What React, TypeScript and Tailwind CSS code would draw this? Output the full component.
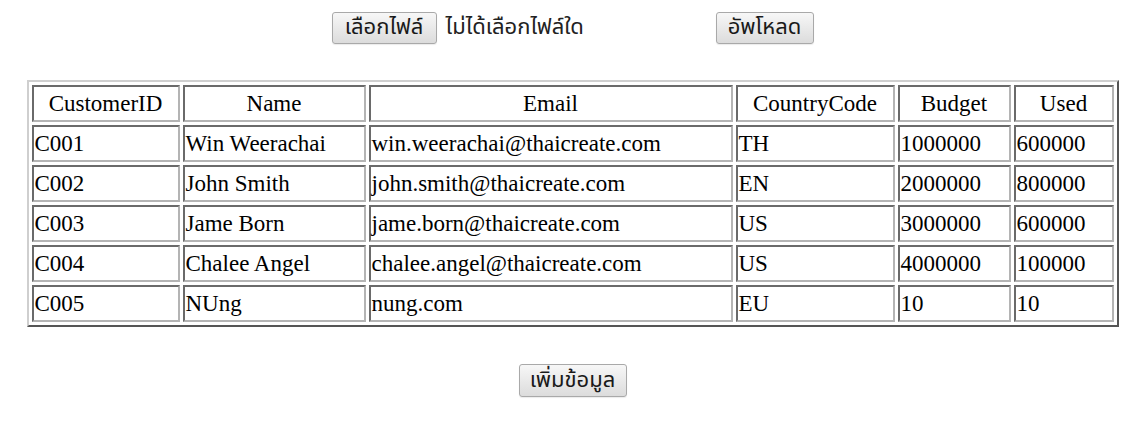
const rows = [
  ['C001', 'Win Weerachai', 'win.weerachai@thaicreate.com', 'TH', '1000000', '600000'],
  ['C002', 'John Smith', 'john.smith@thaicreate.com', 'EN', '2000000', '800000'],
  ['C003', 'Jame Born', 'jame.born@thaicreate.com', 'US', '3000000', '600000'],
  ['C004', 'Chalee Angel', 'chalee.angel@thaicreate.com', 'US', '4000000', '100000'],
  ['C005', 'NUng', 'nung.com', 'EU', '10', '10'],
];

const headers = ['CustomerID', 'Name', 'Email', 'CountryCode', 'Budget', 'Used'];
const widths = ['w-[148px]', 'w-[183px]', 'w-[364px]', 'w-[159px]', 'w-[113px]', 'w-[100px]'];

const thai = { fontFamily: 'Tahoma, "Noto Sans Thai", "DejaVu Sans", sans-serif' };

function Button({ label, className }: { label: string; className: string }) {
  return (
    <button
      type="button"
      className={`flex items-center justify-center rounded-[3px] border border-[#a9a9a9] bg-gradient-to-b from-[#f7f7f7] to-[#dcdcdc] text-[22px] leading-none text-[#1a1a1a] shadow-[0_1px_1px_rgba(0,0,0,0.08)] ${className}`}
      style={thai}
    >
      {label}
    </button>
  );
}

const cell =
  'h-[37px] border-2 border-t-[#6a6a6a] border-l-[#6a6a6a] border-b-[#b4b4b4] border-r-[#b4b4b4] p-0 px-[1px] align-middle leading-none';

export default function App() {
  return (
    <div className="flex min-h-[421px] flex-col items-center bg-white pl-[8px] pt-[12px] text-black">
      {/* form upload */}
      <div className="flex items-center">
        <div className="flex w-[384px] items-center">
          <Button label="เลือกไฟล์" className="h-[32px] w-[105px]" />
          <span className="ml-[9px] text-[22px] leading-none text-[#222]" style={thai}>
            ไม่ได้เลือกไฟล์ใด
          </span>
        </div>
        <Button label="อัพโหลด" className="h-[32px] w-[98px]" />
      </div>

      <table
        className="mt-[36px] w-[1092px] table-fixed border-separate border-spacing-[3px] border-2 border-t-[#cfcfcf] border-l-[#cfcfcf] border-b-[#555] border-r-[#555] text-[23px]"
        style={{ fontFamily: '"Liberation Serif", "Times New Roman", serif' }}
      >
        <thead>
          <tr>
            {headers.map((h, i) => (
              <th key={h} className={`${cell} ${widths[i]} text-center font-normal`}>
                {h}
              </th>
            ))}
          </tr>
        </thead>
        <tbody>
          {rows.map(r => (
            <tr key={r[0]}>
              {r.map((v, i) => (
                <td key={i} className={`${cell} text-left whitespace-nowrap`}>
                  {v}
                </td>
              ))}
            </tr>
          ))}
        </tbody>
      </table>

      <Button label="เพิ่มข้อมูล" className="mt-[37px] h-[33px] w-[108px]" />
    </div>
  );
}
